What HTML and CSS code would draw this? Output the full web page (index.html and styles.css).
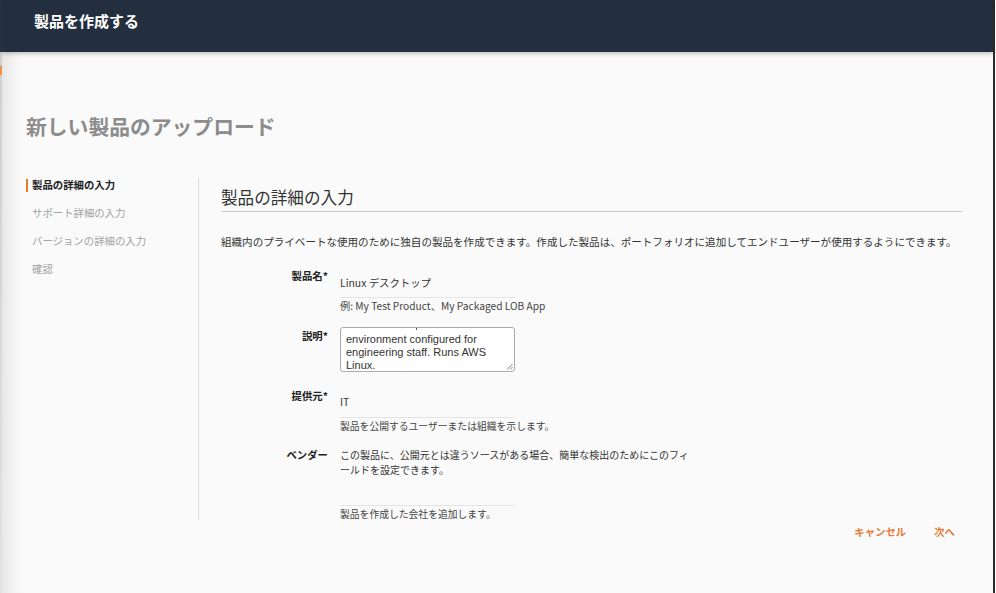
FILE: index.html
```html
<!DOCTYPE html>
<html lang="ja">
<head>
<meta charset="utf-8">
<title>製品を作成する</title>
<link rel="stylesheet" href="styles.css">
</head>
<body>
<div class="frame">
  <div class="edge-left"><span class="edge-mark"></span></div>
  <div class="modal">
    <header class="modal-header">
      <h1 class="modal-title">製品を作成する</h1>
    </header>
    <div class="modal-body">
      <h2 class="page-title">新しい製品のアップロード</h2>
      <div class="wizard">
        <nav class="steps">
          <div class="step active">製品の詳細の入力</div>
          <div class="step">サポート詳細の入力</div>
          <div class="step">バージョンの詳細の入力</div>
          <div class="step">確認</div>
        </nav>
        <section class="panel">
          <h3 class="panel-title">製品の詳細の入力</h3>
          <p class="intro">組織内のプライベートな使用のために独自の製品を作成できます。作成した製品は、ポートフォリオに追加してエンドユーザーが使用するようにできます。</p>
          <div class="form">
            <div class="row row-name">
              <div class="label">製品名*</div>
              <div class="field">
                <div class="input">Linux デスクトップ</div>
                <div class="hint">例: My Test Product、My Packaged LOB App</div>
              </div>
            </div>
            <div class="row row-desc">
              <div class="label">説明*</div>
              <div class="field">
                <div class="textarea">
                  <span class="scroll-tick"></span>
                  <div class="textarea-text">environment configured for<br>engineering staff. Runs AWS<br>Linux.</div>
                  <svg class="grip" width="7" height="7" viewBox="0 0 7 7"><path d="M6.5 1 L1 6.5 M6.5 4 L4 6.5" stroke="#777" stroke-width="0.9" fill="none"/></svg>
                </div>
              </div>
            </div>
            <div class="row row-pub">
              <div class="label">提供元*</div>
              <div class="field">
                <div class="input">IT</div>
                <div class="hint">製品を公開するユーザーまたは組織を示します。</div>
              </div>
            </div>
            <div class="row row-vendor">
              <div class="label">ベンダー</div>
              <div class="field">
                <div class="vendor-note">この製品に、公開元とは違うソースがある場合、簡単な検出のためにこのフィールドを設定できます。</div>
                <div class="input empty"></div>
                <div class="hint">製品を作成した会社を追加します。</div>
              </div>
            </div>
          </div>
        </section>
      </div>
      <div class="actions">
        <span class="btn">キャンセル</span>
        <span class="btn">次へ</span>
      </div>
    </div>
  </div>
  <div class="edge-right"></div>
</div>
</body>
</html>
```

FILE: styles.css
```css
* { box-sizing: border-box; }
html, body { margin: 0; padding: 0; }
body {
  font-family: "Noto Sans CJK JP", "Noto Sans", sans-serif;
  color: #333;
  background: #fafafa;
  width: 996px;
  height: 593px;
  overflow: hidden;
}
.frame {
  display: flex;
  height: 593px;
}
.edge-left {
  width: 2px;
  background: linear-gradient(#2a3441 0, #2a3441 52px, #cfcfcf 52px, #e2e2e2 100%);
  display: flex;
  flex-direction: column;
}
.edge-mark {
  display: block;
  width: 2px;
  height: 9px;
  margin-top: 66px;
  background: #f0924a;
}
.edge-right {
  width: 3px;
  background: linear-gradient(90deg, #2b2b2b 0, #2b2b2b 2px, #ffffff 2px);
}
.modal {
  flex: 1;
  display: flex;
  flex-direction: column;
  background: #fafafa;
  box-shadow: inset 22px 0 18px -16px rgba(0, 0, 0, 0.10);
}
.modal-header {
  height: 52px;
  background: #232f3e;
  display: flex;
  align-items: center;
  padding-left: 32px;
  box-shadow: 0 2px 4px rgba(0, 0, 0, 0.22);
  position: relative;
}
.modal-title {
  margin: 0;
  color: #fff;
  font-size: 15px;
  font-weight: 700;
  line-height: 20px;
  padding-bottom: 11px;
}
.modal-body {
  padding: 0 38px 0 24px;
}
.page-title {
  margin: 59px 0 37px;
  font-size: 20.8px;
  line-height: 30px;
  font-weight: 700;
  color: #8c8c8c;
}
.wizard {
  display: flex;
  height: 342px;
}
.steps {
  width: 173px;
  border-right: 1px solid #dcdcdc;
  flex: none;
}
.step {
  font-size: 10.4px;
  line-height: 14px;
  height: 14px;
  margin-bottom: 14px;
  padding-left: 6px;
  color: #a3a3a3;
}
.step.active {
  color: #222;
  font-weight: 700;
  border-left: 2px solid #ec7a22;
  padding-left: 4px;
  margin-top: 1px;
  height: 13px;
  line-height: 12px;
}
.panel {
  flex: 1;
  padding-left: 22px;
  padding-right: 0;
  margin-right: -7px;
}
.panel-title {
  margin: 8px 0 0;
  font-size: 16.6px;
  font-weight: 400;
  line-height: 22px;
  padding-bottom: 3px;
  color: #333;
  border-bottom: 1px solid #c8c8c8;
}
.intro {
  margin: 22px 0 0;
  font-size: 10.55px;
  line-height: 16px;
  color: #333;
  white-space: nowrap;
}
.form {
  display: flex;
  flex-direction: column;
}
.row {
  display: flex;
  gap: 12px;
}
.row-name { margin-top: 18px; }
.row-desc { margin-top: 13px; }
.row-pub { margin-top: 16px; }
.row-vendor { margin-top: 13px; }
.label {
  width: 107px;
  flex: none;
  text-align: right;
  font-size: 10.4px;
  font-weight: 700;
  line-height: 14px;
  color: #222;
  padding-top: 1px;
}
.row-desc .label { padding-top: 2px; }
.field {
  width: 360px;
}
.input {
  width: 175px;
  height: 30px;
  border-bottom: 1px solid #e4e4e4;
  font-size: 10.4px;
  line-height: 14px;
  padding-top: 8px;
  color: #333;
}
.row-pub .input { padding-top: 7px; }
.input.empty { height: 29px; }
.hint {
  font-size: 9.8px;
  line-height: 16px;
  color: #444;
}
.row-name .hint { font-size: 10.2px; }
.textarea {
  position: relative;
  width: 175px;
  height: 45px;
  border: 1px solid #ababab;
  border-radius: 3px;
  background: #fff;
  overflow: hidden;
  padding: 0 0 0 5px;
}
.scroll-tick {
  display: block;
  width: 1px;
  height: 2px;
  margin-left: 70px;
  background: #555;
}
.textarea-text {
  margin-top: 3px;
  font-family: "Liberation Sans", sans-serif;
  font-size: 11px;
  line-height: 13px;
  color: #333;
  white-space: nowrap;
}
.grip {
  position: absolute;
  right: 1px;
  bottom: 1px;
}
.vendor-note {
  width: 352px;
  font-size: 10px;
  line-height: 15px;
  color: #333;
}
.actions {
  display: flex;
  justify-content: flex-end;
  gap: 28px;
  margin-top: 5px;
}
.btn {
  font-size: 10.4px;
  font-weight: 700;
  line-height: 14px;
  color: #e97a35;
}
```
